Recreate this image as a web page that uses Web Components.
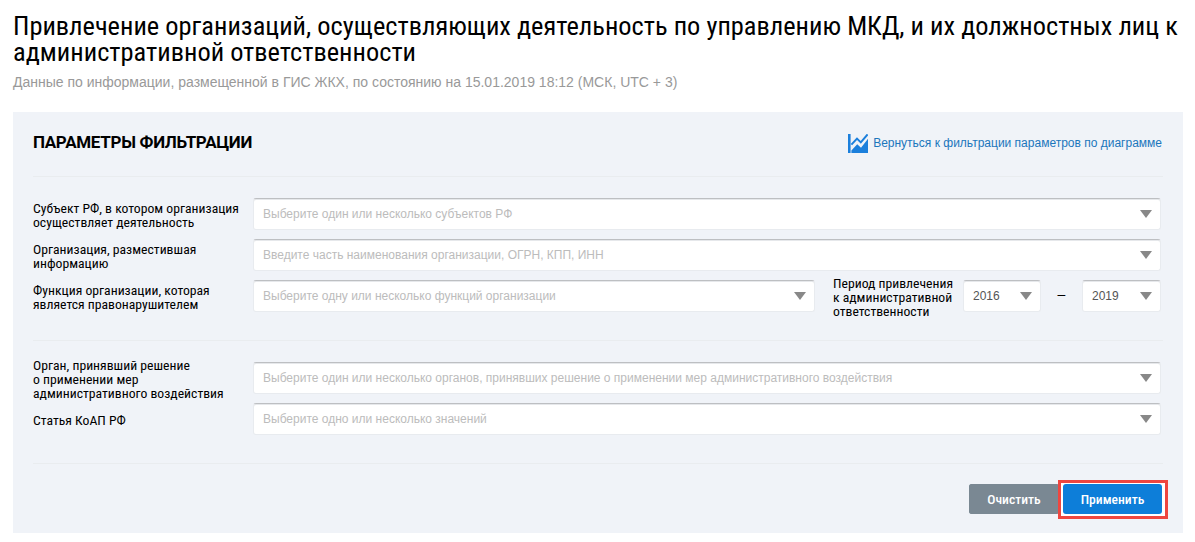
<!DOCTYPE html>
<html lang="ru">
<head>
<meta charset="utf-8">
<title>Параметры фильтрации</title>
<style>
    html, body { margin: 0; background: #fff; }
    body { font-family: "Roboto", "Liberation Sans", sans-serif; }
</style>
</head>
<body>
<report-page>
    <span slot="title">Привлечение организаций, осуществляющих деятельность по управлению МКД, и их должностных лиц к административной ответственности</span>
    <span slot="subtitle">Данные по информации, размещенной в ГИС ЖКХ, по состоянию на 15.01.2019 18:12 (МСК, UTC + 3)</span>
    <filter-panel>
        <span slot="heading">ПАРАМЕТРЫ ФИЛЬТРАЦИИ</span>
        <chart-link slot="link">Вернуться к фильтрации параметров по диаграмме</chart-link>

        <filter-group>
            <filter-row label="Субъект РФ, в котором организация осуществляет деятельность">
                <drop-select placeholder="Выберите один или несколько субъектов РФ"></drop-select>
            </filter-row>
            <filter-row label="Организация, разместившая информацию">
                <drop-select placeholder="Введите часть наименования организации, ОГРН, КПП, ИНН"></drop-select>
            </filter-row>
            <filter-row label="Функция организации, которая является правонарушителем">
                <drop-select placeholder="Выберите одну или несколько функций организации"></drop-select>
                <period-range label="Период привлечения<br>к административной<br>ответственности" from="2016" to="2019"></period-range>
            </filter-row>
        </filter-group>

        <filter-group>
            <filter-row label="Орган, принявший решение<br>о применении мер<br>административного воздействия">
                <drop-select placeholder="Выберите один или несколько органов, принявших решение о применении мер административного воздействия"></drop-select>
            </filter-row>
            <filter-row label="Статья КоАП РФ">
                <drop-select placeholder="Выберите одно или несколько значений"></drop-select>
            </filter-row>
        </filter-group>

        <action-button slot="actions" kind="clear">Очистить</action-button>
        <action-button slot="actions" kind="apply" marked>Применить</action-button>
    </filter-panel>
</report-page>

<script>
const NARROW = `"Roboto Condensed", "Roboto", "Liberation Sans Narrow", sans-serif`;

customElements.define('report-page', class extends HTMLElement {
    constructor() {
        super();
        this.attachShadow({mode: "open"});
        this.shadowRoot.innerHTML = `
            <style>
                :host { display: block; padding: 13px 12px 9px 13px; }
                h1 {
                    margin: 0;
                    font: 400 26.4px/26px ${NARROW};
                    font-stretch: 75%;
                    color: #000;
                }
                p {
                    margin: 7px 0 20px;
                    font: 400 14px/20px "Liberation Sans", sans-serif;
                    color: #999;
                }
            </style>
            <h1><slot name="title"></slot></h1>
            <p><slot name="subtitle"></slot></p>
            <slot></slot>
        `;
    }
});

customElements.define('filter-panel', class extends HTMLElement {
    constructor() {
        super();
        this.attachShadow({mode: "open"});
        this.shadowRoot.innerHTML = `
            <style>
                :host { display: block; background: #f0f3f8; padding: 0 20px 19px; }
                header {
                    display: flex;
                    justify-content: space-between;
                    align-items: center;
                    height: 64px;
                    border-bottom: 1px solid #e9ecef;
                }
                h2 {
                    margin: 0 0 5px;
                    font: 700 17px/20px "Roboto", sans-serif;
                    letter-spacing: -.3px;
                    color: #000;
                }
                footer {
                    display: flex;
                    justify-content: flex-end;
                    gap: 4px;
                    padding: 20px 1px 0 0;
                }
            </style>
            <header>
                <h2><slot name="heading"></slot></h2>
                <slot name="link"></slot>
            </header>
            <slot></slot>
            <footer><slot name="actions"></slot></footer>
        `;
    }
});

customElements.define('filter-group', class extends HTMLElement {
    constructor() {
        super();
        this.attachShadow({mode: "open"});
        this.shadowRoot.innerHTML = `
            <style>
                :host {
                    display: flex;
                    flex-direction: column;
                    gap: 9px;
                    padding: 21px 2px 28px 0;
                    border-bottom: 1px solid #e9ecef;
                }
            </style>
            <slot></slot>
        `;
    }
});

customElements.define('filter-row', class extends HTMLElement {
    constructor() {
        super();
        this.attachShadow({mode: "open"});
        this.shadowRoot.innerHTML = `
            <style>
                :host { display: flex; align-items: center; height: 32px; }
                .label {
                    flex: 0 0 220px;
                    padding-top: 2px;
                    font: 400 13.7px/14px ${NARROW};
                    font-stretch: 75%;
                    color: #000;
                }
                ::slotted(drop-select) { flex: 1; }
            </style>
            <div class="label">${this.getAttribute('label')}</div>
            <slot></slot>
        `;
    }
});

customElements.define('period-range', class extends HTMLElement {
    constructor() {
        super();
        this.attachShadow({mode: "open"});
        this.shadowRoot.innerHTML = `
            <style>
                :host { display: flex; align-items: center; flex: none; margin-left: 18px; height: 32px; }
                .label {
                    width: 130px;
                    padding-top: 2px;
                    font: 400 13.7px/14px ${NARROW};
                    font-stretch: 75%;
                    color: #000;
                }
                .dash { width: 41px; padding-bottom: 5px; text-align: center; font: 400 14px/1 "Liberation Sans", sans-serif; color: #000; }
                drop-select { width: 78px; }
                drop-select.to { width: 79px; }
            </style>
            <div class="label">${this.getAttribute('label')}</div>
            <drop-select value="${this.getAttribute('from')}"></drop-select>
            <div class="dash">–</div>
            <drop-select class="to" value="${this.getAttribute('to')}"></drop-select>
        `;
    }
});

customElements.define('drop-select', class extends HTMLElement {
    constructor() {
        super();
        this.attachShadow({mode: "open"});
        const value = this.getAttribute('value');
        this.shadowRoot.innerHTML = `
            <style>
                :host {
                    display: flex;
                    align-items: center;
                    justify-content: space-between;
                    box-sizing: border-box;
                    height: 32px;
                    min-width: 0;
                    padding: 0 7px 1px 9px;
                    background: #fff;
                    border: 1px solid #e8ebef;
                    border-top: 1px solid #bdbfc2;
                    box-shadow: inset 0 1px 0 #e6e8eb;
                    border-radius: 3px;
                }
                span {
                    font: 400 12px/16px "Liberation Sans", sans-serif;
                    color: #bcbcbc;
                    white-space: nowrap;
                }
                span.value { color: #555; }
                i {
                    flex: none;
                    width: 0;
                    height: 0;
                    margin-right: 1px;
                    border: 6px solid transparent;
                    border-top: 8px solid #888;
                    border-bottom: 0;
                }
            </style>
            <span class="${value ? 'value' : ''}">${value || this.getAttribute('placeholder')}</span>
            <i></i>
        `;
    }
});

customElements.define('chart-link', class extends HTMLElement {
    constructor() {
        super();
        this.attachShadow({mode: "open"});
        this.shadowRoot.innerHTML = `
            <style>
                :host {
                    display: flex;
                    align-items: center;
                    gap: 5px;
                    margin: 0 1px 2px 0;
                    font: 400 12px/16px "Liberation Sans", sans-serif;
                    color: #1b76bc;
                }
                svg { display: block; flex: none; }
            </style>
            <svg width="20" height="19" viewBox="0 0 20 19">
                <path fill="#1b7fdc" d="M0 0h2.6v19H0z"/>
                <path fill="#1b7fdc" d="M3.4 19v-2.6l5.8-6.2 3.8 3.6L20 4.8V19z"/>
                <path fill="none" stroke="#1b7fdc" stroke-width="2" d="M3.4 10.6L9 4.6l3.8 3.8L19.6 .4"/>
            </svg>
            <slot></slot>
        `;
    }
});

customElements.define('action-button', class extends HTMLElement {
    constructor() {
        super();
        this.attachShadow({mode: "open"});
        this.shadowRoot.innerHTML = `
            <style>
                :host {
                    display: block;
                    position: relative;
                    isolation: isolate;
                    box-sizing: border-box;
                    height: 30px;
                    border-radius: 3px;
                    font: 500 13.6px/30px ${NARROW};
                    font-stretch: 75%;
                    text-align: center;
                    color: #fff;
                }
                :host([kind="clear"]) { width: 90px; background: #7a8893; }
                :host([kind="apply"]) { width: 99px; background: #0d7ed9; }
                /* the red annotation frame lies over the neighbouring button */
                :host([marked])::before {
                    content: "";
                    position: absolute;
                    z-index: -1;
                    inset: -4px -6px -5px -5px;
                    background: #fff;
                    border: 3px solid #ee4640;
                    box-sizing: border-box;
                }
                .face { display: block; background: inherit; border-radius: 3px; }
            </style>
            <span class="face"><slot></slot></span>
        `;
    }
});
</script>
</body>
</html>
